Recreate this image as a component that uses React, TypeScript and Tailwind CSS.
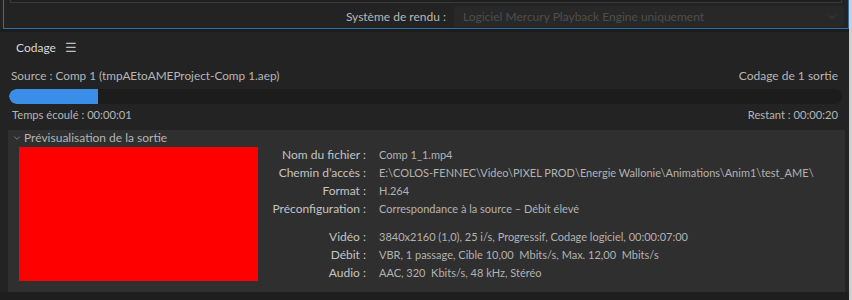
import { ChevronDown } from "lucide-react";

const rows = [
  { label: "Nom du fichier", value: "Comp 1_1.mp4" },
  { label: "Chemin d\u2019accès", value: "E:\\COLOS-FENNEC\\Video\\PIXEL PROD\\Energie Wallonie\\Animations\\Anim1\\test_AME\\" },
  { label: "Format", value: "H.264" },
  { label: "Préconfiguration", value: "Correspondance à la source \u2013 Débit élevé" },
];

const rows2 = [
  { label: "Vidéo", value: "3840x2160 (1,0), 25 i/s, Progressif, Codage logiciel, 00:00:07:00" },
  { label: "Débit", value: "VBR, 1 passage, Cible 10,00  Mbits/s, Max. 12,00  Mbits/s" },
  { label: "Audio", value: "AAC, 320  Kbits/s, 48 kHz, Stéréo" },
];

function InfoRow({ label, value }: { label: string; value: string }) {
  return (
    <div className="flex h-[18px] items-center">
      <span className="w-[108px] shrink-0 text-right text-[#c4c4c4]">{label} :</span>
      <span className="ml-[13px] whitespace-pre text-[11px] text-[#b2b2b2]">{value}</span>
    </div>
  );
}

export default function App() {
  return (
    <div
      className="flex h-[300px] w-[852px] overflow-hidden bg-[#232323] text-[12px]"
      style={{ fontFamily: "Lato, 'Open Sans', sans-serif" }}
    >
      <div className="flex w-[849px] flex-col">
        {/* render settings strip */}
        <div className="ml-[3px] flex h-[29px] flex-col border-x border-b border-[#2f6fa6] bg-[#232323]">
          <div className="mx-[6px] h-[3px] border-x border-b border-[#3a3a3a] bg-[#1f1f1f]" />
          <div className="mt-[3px] flex items-center justify-end pr-[4px]">
            <span className="mr-[8px] text-[#b8b8b8]">Système de rendu :</span>
            <div className="flex h-[21px] w-[390px] items-center justify-between rounded-[2px] bg-[#282828] pl-[9px] pr-[6px]">
              <span className="text-[#4e4e4e]">Logiciel Mercury Playback Engine uniquement</span>
              <ChevronDown className="h-[12px] w-[12px] text-[#4a4a4a]" strokeWidth={1.5} />
            </div>
          </div>
        </div>
        <div className="h-[3px] bg-[#1c1c1c]" />

        {/* Codage panel */}
        <div className="flex flex-1 flex-col">
          <div className="flex h-[30px] items-center gap-[9px] pl-[16px] pt-[1px]">
            <span className="text-[#d6d6d6]">Codage</span>
            <span className="text-[13px] leading-none text-[#bdbdbd]">☰</span>
          </div>

          <div className="flex flex-col px-[9px]">
            <div className="flex h-[24px] items-center justify-between pl-[2px] pr-[2px] pt-[3px] text-[#b6b6b6]">
              <span className="text-[11.8px]">Source : Comp 1 (tmpAEtoAMEProject-Comp 1.aep)</span>
              <span>Codage de 1 sortie</span>
            </div>
            <div className="mt-[3px] h-[15px] w-[833px] overflow-hidden rounded-full bg-[#1c1c1c]">
              <div className="h-full w-[89px] rounded-l-full bg-[#3a8ee8]" />
            </div>
            <div className="flex h-[22px] items-center justify-between pl-[3px] pr-[2px] text-[11.2px] text-[#b6b6b6]">
              <span>Temps écoulé : 00:00:01</span>
              <span>Restant : 00:00:20</span>
            </div>
          </div>

          {/* preview */}
          <div className="ml-[8px] mt-[4px] flex h-[162px] w-[837px] flex-col bg-[#2f2f2f]">
            <div className="flex h-[16px] items-center pl-[4px] text-[#b4b4b4]">
              <ChevronDown className="h-[10px] w-[10px] text-[#a8a8a8]" strokeWidth={1.5} />
              <span className="ml-[2px]">Prévisualisation de la sortie</span>
            </div>
            <div className="flex items-start pl-[11px]">
              <div className="mt-[1px] h-[134px] w-[239px] shrink-0 bg-[#ff0000]" />
              <div className="flex flex-col">
                {rows.map((r) => (
                  <InfoRow key={r.label} {...r} />
                ))}
                <div className="h-[10px]" />
                {rows2.map((r) => (
                  <InfoRow key={r.label} {...r} />
                ))}
              </div>
            </div>
          </div>
          <div className="flex-1 bg-[#1e1e1e]" />
        </div>
      </div>
      <div className="w-[3px] bg-[#cfcfcf]" />
    </div>
  );
}
